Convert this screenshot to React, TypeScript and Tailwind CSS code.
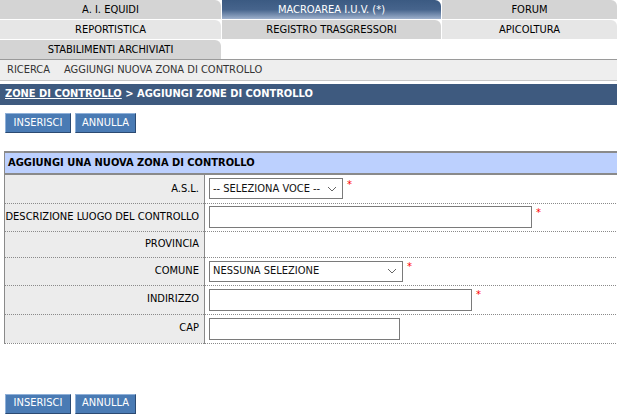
import React from "react";

const tabRows: { label: string; tone: string }[][] = [
  [
    { label: "A. I. EQUIDI", tone: "dark" },
    { label: "MACROAREA I.U.V. (*)", tone: "active" },
    { label: "FORUM", tone: "dark" },
  ],
  [
    { label: "REPORTISTICA", tone: "light" },
    { label: "REGISTRO TRASGRESSORI", tone: "dark" },
    { label: "APICOLTURA", tone: "light" },
  ],
  [{ label: "STABILIMENTI ARCHIVIATI", tone: "dark" }],
];

const Tab = ({ label, tone }: { label: string; tone: string }) => {
  const cls =
    tone === "active"
      ? "bg-gradient-to-b from-[#3b5a82] via-[#46648c] to-[#9fb1cc] text-white"
      : tone === "light"
      ? "bg-[#e6e6e6] text-black"
      : "bg-[#d4d4d4] text-black";
  return (
    <div
      className={`${cls} h-[19px] rounded-tr-[6px] flex items-center justify-center text-[11px] leading-none`}
    >
      {label}
    </div>
  );
};

const Button = ({ label, w }: { label: string; w: string }) => (
  <button
    className={`${w} h-[20px] bg-[#4a7bb4] text-white text-[11px] border border-t-[#8fb0d8] border-l-[#8fb0d8] border-r-[#2b4a72] border-b-[#2b4a72] flex items-center justify-center`}
  >
    {label}
  </button>
);

const Star = () => <span className="text-[#ff0000] text-[11px] ml-[4px] relative top-[-4px]">*</span>;

const Select = ({ label, w }: { label: string; w: string }) => (
  <div className={`${w} h-[21px] border border-[#7a7a7a] bg-white flex items-center justify-between pl-[3px] pr-[5px] text-[#111]`}>
    <span>{label}</span>
    <svg width="10" height="6" viewBox="0 0 10 6" fill="none">
      <path d="M1 1l4 4 4-4" stroke="#666" strokeWidth="1" />
    </svg>
  </div>
);

export default function App() {
  const rows = [
    { label: "A.S.L.", h: "h-[29px]", field: (
      <>
        <Select label="-- SELEZIONA VOCE --" w="w-[134px]" />
        <Star />
      </>
    ) },
    { label: "DESCRIZIONE LUOGO DEL CONTROLLO", h: "h-[28px]", field: (
      <>
        <input className="w-[323px] h-[22px] border border-[#7a7a7a]" />
        <Star />
      </>
    ) },
    { label: "PROVINCIA", h: "h-[26px]", field: null },
    { label: "COMUNE", h: "h-[28px]", field: (
      <>
        <Select label="NESSUNA SELEZIONE" w="w-[194px]" />
        <Star />
      </>
    ) },
    { label: "INDIRIZZO", h: "h-[29px]", field: (
      <>
        <input className="w-[263px] h-[22px] border border-[#7a7a7a]" />
        <Star />
      </>
    ) },
    { label: "CAP", h: "h-[29px]", field: (
      <input className="w-[191px] h-[22px] border border-[#7a7a7a]" />
    ) },
  ];

  return (
    <div
      className="w-[617px] h-[414px] overflow-hidden bg-white text-[11px]"
      style={{ fontFamily: '"DejaVu Sans Condensed", "Liberation Sans", sans-serif' }}
    >
      <div className="flex flex-col gap-[1px]">
        {tabRows.map((row, i) => (
          <div key={i} className="grid grid-cols-[221px_219px_1fr] gap-[1px]">
            {row.map((t) => (
              <Tab key={t.label} label={t.label} tone={t.tone} />
            ))}
          </div>
        ))}
      </div>
      <div className="border-t border-[#9a9a9a] border-b border-b-[#c8c8c8] bg-[#eeeeee] h-[22px] flex items-center gap-[14px] px-[7px] text-[#333] text-[11px]">
        <span>RICERCA</span>
        <span>AGGIUNGI NUOVA ZONA DI CONTROLLO</span>
      </div>
      <div className="mt-[3px] h-[21px] bg-[#3e5a7f] text-white font-bold flex items-center px-[5px] text-[11px]">
        <span className="underline">ZONE DI CONTROLLO</span>
        <span>&nbsp;&gt; AGGIUNGI ZONE DI CONTROLLO</span>
      </div>
      <div className="flex gap-[4px] ml-[5px] mt-[8px]">
        <Button label="INSERISCI" w="w-[66px]" />
        <Button label="ANNULLA" w="w-[61px]" />
      </div>
      <table className="ml-[4px] mt-[18px] w-[620px] border-collapse text-[11px]">
        <tbody>
          <tr className="bg-[#bcd0fe] h-[22px] border-t-2 border-b-2 border-[#8a8a8a]">
            <td colSpan={2} className="font-bold px-[3px] border-l border-[#8a8a8a]">
              AGGIUNGI UNA NUOVA ZONA DI CONTROLLO
            </td>
          </tr>
          {rows.map((r) => (
            <tr key={r.label} className={`${r.h} border-b border-dotted border-[#8a8a8a]`}>
              <td className="w-[200px] bg-[#ececec] text-right pr-[5px] border-l border-r border-l-[#8a8a8a] border-r-[#8a8a8a] whitespace-nowrap">
                {r.label}
              </td>
              <td className="pl-[4px]">
                <div className="flex items-center">{r.field}</div>
              </td>
            </tr>
          ))}
        </tbody>
      </table>
      <div className="flex gap-[4px] ml-[5px] mt-[50px]">
        <Button label="INSERISCI" w="w-[66px]" />
        <Button label="ANNULLA" w="w-[61px]" />
      </div>
    </div>
  );
}
